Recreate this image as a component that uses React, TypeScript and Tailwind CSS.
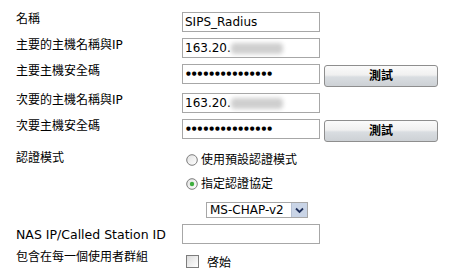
import React from 'react';

const font = 'font-["DejaVu_Sans","Noto_Sans_CJK_TC",sans-serif]';

function TextBox({ children }: { children?: React.ReactNode }) {
  return (
    <div className="w-[138px] h-[20px] border border-[#a7a7a7] bg-white px-[2px] flex items-center text-[12px] leading-none text-black whitespace-nowrap overflow-hidden">
      {children}
    </div>
  );
}

function TestButton() {
  return (
    <div className="ml-[4px] mt-[1px] w-[114px] h-[22px] rounded-[3px] border border-[#8e8e8e] bg-[linear-gradient(to_bottom,#fbfbfb_0%,#f0f0f0_45%,#d9dde1_55%,#cdd1d5_100%)] flex items-center justify-center text-[12px] font-bold text-black">
      測試
    </div>
  );
}

function Dots() {
  return <span className="pl-[1px] tracking-[1px] text-[5.5px] leading-none">{'●'.repeat(15)}</span>;
}

function Blurred() {
  return <span className="inline-block w-[52px] h-[11px] bg-[#cfcfcf] blur-[2px] rounded-sm" />;
}

function Radio({ checked }: { checked?: boolean }) {
  return (
    <svg width="12" height="12" viewBox="0 0 12 12" className="shrink-0">
      <defs>
        <linearGradient id="rg" x1="0" y1="0" x2="1" y2="1">
          <stop offset="0" stopColor="#e2e2e2" />
          <stop offset="1" stopColor="#ffffff" />
        </linearGradient>
      </defs>
      <circle cx="6" cy="6" r="5.3" fill="url(#rg)" stroke="#7d7d7d" strokeWidth="1" />
      {checked && <circle cx="6" cy="6" r="2.2" fill="#3fae3f" />}
    </svg>
  );
}

export default function App() {
  return (
    <div className={`${font} w-[452px] h-[270px] bg-white text-black text-[12px] pt-[12px] pl-[16px]`}>
      <div className="grid grid-cols-[166px_auto] gap-y-[6px] items-start">
        <div className="leading-[14px]">名稱</div>
        <TextBox>SIPS_Radius</TextBox>

        <div className="leading-[14px]">主要的主機名稱與IP</div>
        <TextBox>
          163.20.<Blurred />
        </TextBox>

        <div className="leading-[14px]">主要主機安全碼</div>
        <div className="flex items-start">
          <TextBox>
            <Dots />
          </TextBox>
          <TestButton />
        </div>

        <div className="leading-[14px]">次要的主機名稱與IP</div>
        <TextBox>
          163.20.<Blurred />
        </TextBox>

        <div className="leading-[14px]">次要主機安全碼</div>
        <div className="flex items-start">
          <TextBox>
            <Dots />
          </TextBox>
          <TestButton />
        </div>

        <div className="leading-[14px] pt-[3px]">認證模式</div>
        <div className="flex flex-col">
          <div className="h-[24px] flex items-center pl-[4px] gap-[3px]">
            <Radio />
            <span>使用預設認證模式</span>
          </div>
          <div className="h-[24px] flex items-center pl-[4px] gap-[3px]">
            <Radio checked />
            <span>指定認證協定</span>
          </div>
          <div className="mt-[6px] ml-[24px] w-[102px] h-[16px] border border-[#a7a7a7] flex items-center">
            <span className="flex-1 pl-[3px] leading-none">MS-CHAP-v2</span>
            <div className="w-[16px] h-[14px] bg-[#c9d4e6] border-l border-[#b5c0d3] flex items-center justify-center">
              <svg width="9" height="7" viewBox="0 0 9 7">
                <path d="M1 1.5 L4.5 5 L8 1.5" fill="none" stroke="#1e2f5a" strokeWidth="1.8" />
              </svg>
            </div>
          </div>
        </div>

        <div className="leading-[14px] pt-[4px] text-[12.5px]">NAS IP/Called Station ID</div>
        <TextBox />

        <div className="leading-[14px]">包含在每一個使用者群組</div>
        <div className="flex items-center pl-[4px] pt-[1px] gap-[8px]">
          <div className="w-[13px] h-[13px] border border-[#7d7d7d] bg-[linear-gradient(135deg,#dcdcdc,#ffffff)]" />
          <span className="pt-[3px]">啓始</span>
        </div>
      </div>
    </div>
  );
}
